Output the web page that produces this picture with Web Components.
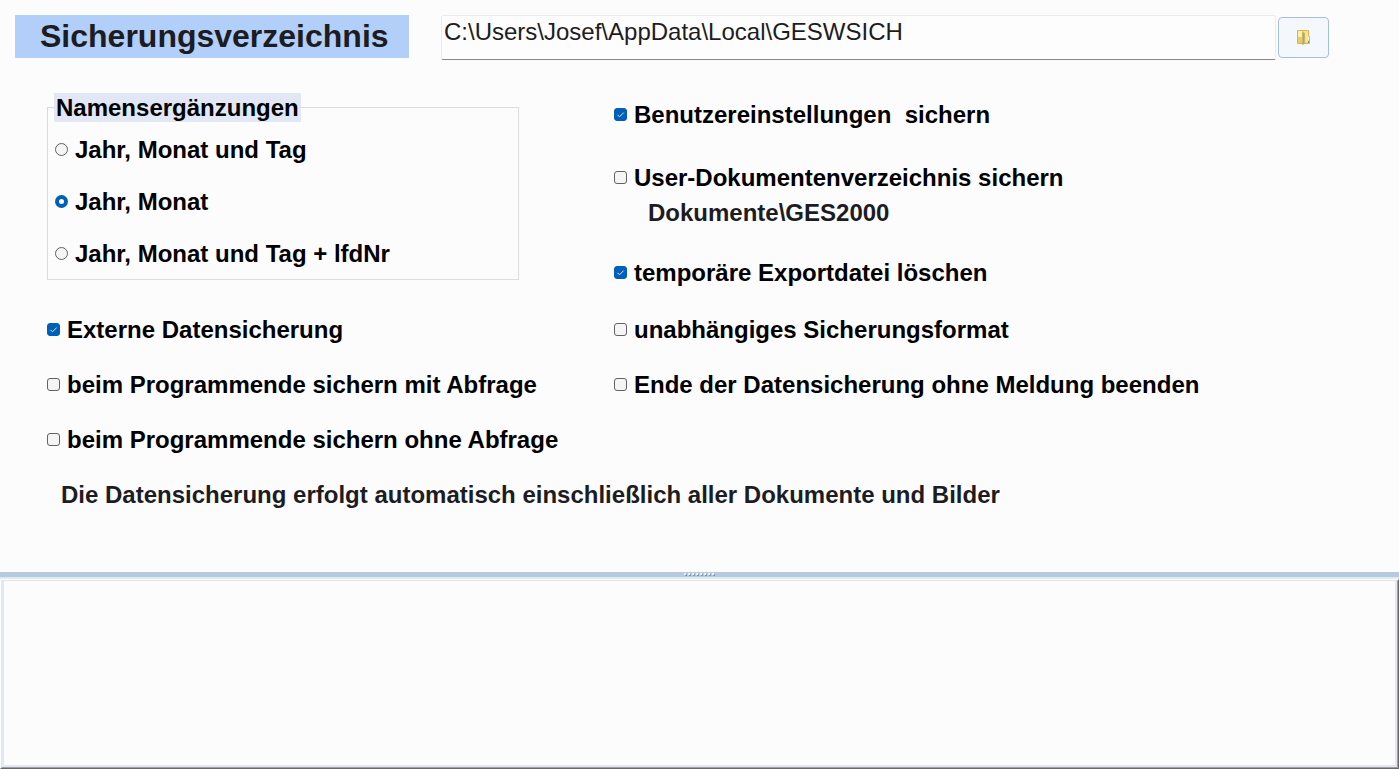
<!DOCTYPE html>
<html lang="de">
<head>
<meta charset="utf-8">
<title>Datensicherung</title>
<style>
    body {
        margin: 0;
        background: #fcfcfc;
        color: #1c1c22;
        font: 24px/29px "Liberation Sans", Arial, sans-serif;
    }
</style>
</head>
<body>
<backup-settings></backup-settings>

<script>
const labelStyles = `
    label {
        display: flex;
        align-items: center;
        gap: 7px;
        width: fit-content;
        color: #000;
        font-weight: bold;
        white-space: pre;
    }

    input {
        appearance: none;
        box-sizing: border-box;
        flex: none;
        width: 13px;
        height: 13px;
        margin: 0;
        border: 1px solid #626262;
        background: #f5f5f5;
    }
`;

class CheckOption extends HTMLElement {
    constructor() {
        super();
        this.attachShadow({ mode: 'open' });
    }

    connectedCallback() {
        this.shadowRoot.innerHTML = `
        <style>
            ${labelStyles}

            :host {
                display: block;
            }

            .box {
                display: grid;
            }

            input,
            svg {
                grid-area: 1 / 1;
            }

            input {
                border-radius: 3px;
            }

            input:checked {
                border-color: #005fb8;
                background: #005fb8;
            }

            svg {
                width: 13px;
                height: 13px;
                pointer-events: none;
                visibility: hidden;
            }

            input:checked + svg {
                visibility: visible;
            }
        </style>

        <label>
            <span class="box">
                <input type="checkbox">
                <svg viewBox="0 0 13 13" fill="none" stroke="#d5e6f6"><path d="M3.5 6.8 5.5 8.8 9.7 4.6"/></svg>
            </span><span><slot></slot></span>
        </label>
        `.replace(/>\s+</g, '><');

        this.shadowRoot.querySelector('input').checked = this.hasAttribute('checked');
    }
}

class RadioGroup extends HTMLElement {
    constructor() {
        super();
        this.attachShadow({ mode: 'open' });
    }

    connectedCallback() {
        const options = this.getAttribute('options').split('|');
        const selected = this.getAttribute('selected');

        this.shadowRoot.innerHTML = `
        <style>
            ${labelStyles}

            :host {
                display: block;
            }

            fieldset {
                min-width: 0;
                margin: 0;
                padding: 13px 7px 11px;
                border: 1px solid #dcdcdc;
            }

            legend {
                margin-left: -1px;
                padding: 0 2px;
                background: #e1e7f4;
                color: #000;
                font-weight: bold;
            }

            .options {
                display: grid;
                gap: 23px;
            }

            input {
                border-radius: 50%;
            }

            input:checked {
                border: 4px solid #005fb8;
                background: #fff;
            }
        </style>

        <fieldset>
            <legend><slot></slot></legend>
            <div class="options">
                ${options.map((text) => `<label><input type="radio" name="suffix" ${text === selected ? 'checked' : ''}><span>${text}</span></label>`).join('')}
            </div>
        </fieldset>
        `;
    }
}

class DirectoryPicker extends HTMLElement {
    constructor() {
        super();
        this.attachShadow({ mode: 'open' });
    }

    connectedCallback() {
        this.shadowRoot.innerHTML = `
        <style>
            :host {
                display: grid;
                grid-template-columns: 426fr 837fr 51px;
                align-items: start;
                padding: 15px 70px 0 15px;
            }

            label {
                margin-right: 32px;
                padding: 3px 0 3px 25px;
                background: #b1cff9;
                font-size: 32px;
                font-weight: bold;
                line-height: 37px;
            }

            input {
                box-sizing: border-box;
                min-width: 0;
                height: 45px;
                margin-right: 2px;
                padding: 0 2px 11px;
                border: 1px solid #ececec;
                border-bottom-color: #868686;
                border-radius: 2px;
                background: #fdfdfd;
                color: inherit;
                font: inherit;
            }

            button {
                display: grid;
                place-items: center;
                height: 41px;
                margin-top: 2px;
                padding: 0;
                border: 1px solid #a5bfe0;
                border-radius: 4px;
                background: #f4f8fc;
            }
        </style>

        <label for="path"><slot></slot></label>
        <input id="path" type="text" value="${this.getAttribute('path')}">
        <button type="button" aria-label="Verzeichnis wählen">
            <svg width="18" height="18" viewBox="0 0 18 18">
                <path d="M2.5 1.5h11v5l1 1v7h-12z" fill="#ecd77d" stroke="#dcb44c"/>
                <path d="M9 2h4v11H9z" fill="#f4e48b"/>
                <path d="M3 2h4v12H3z" fill="#fbf0a8"/>
                <path d="M3 8h4v6H3z" fill="#e7cf68"/>
                <path d="M7 2.5 10 4v11l-3 1z" fill="#c5b568"/>
                <path d="M8.5 4v11" stroke="#b5a763"/>
                <path d="M13 8h1v3h-1z" fill="#fff"/>
                <path d="M13 12h1v2h-1z" fill="#5f9fa0"/>
            </svg>
        </button>
        `;
    }
}

class SplitBar extends HTMLElement {
    constructor() {
        super();
        this.attachShadow({ mode: 'open' });
    }

    connectedCallback() {
        this.shadowRoot.innerHTML = `
        <style>
            :host {
                display: flex;
                justify-content: center;
                height: 5px;
                border-bottom: 2px solid #e1e9f5;
                background: #b5c9e1;
            }

            svg {
                width: 32px;
                height: 5px;
            }
        </style>

        <svg viewBox="0 0 32 5" shape-rendering="crispEdges">
            <defs>
                <pattern id="grip" width="4" height="5" patternUnits="userSpaceOnUse">
                    <path d="M1 2h2v2H1z" fill="#8296ad"/>
                    <path d="M0 1h2v2H0z" fill="#edf1f6"/>
                </pattern>
            </defs>
            <rect width="31" height="5" fill="url(#grip)"/>
        </svg>
        `;
    }
}

class LogPane extends HTMLElement {
    constructor() {
        super();
        this.attachShadow({ mode: 'open' });
    }

    connectedCallback() {
        this.shadowRoot.innerHTML = `
        <style>
            :host {
                display: flex;
                box-sizing: border-box;
                min-height: 120px;
                border: 1px solid #696969;
                border-top-color: #fff;
                border-left-color: #fff;
            }

            textarea {
                box-sizing: border-box;
                flex: 1;
                resize: none;
                margin: 0;
                padding: 4px;
                border: 1px solid #a0a0a0;
                border-top-color: #e3e3e3;
                border-left-color: #e1e7f3;
                outline: none;
                background: #fcfcfc;
                box-shadow: inset 2px 0 #e1e7f3, inset -2px -2px #e1e7f3;
                color: inherit;
                font: inherit;
            }
        </style>

        <textarea aria-label="Protokoll"></textarea>
        `;
    }
}

class BackupSettings extends HTMLElement {
    constructor() {
        super();
        this.attachShadow({ mode: 'open' });
    }

    connectedCallback() {
        this.shadowRoot.innerHTML = `
        <style>
            :host {
                display: flex;
                flex-direction: column;
                min-height: 100vh;
            }

            main {
                display: grid;
                grid-template-columns: minmax(0, 567fr) minmax(0, 785fr);
                padding: 33px 0 63px 47px;
            }

            .left,
            .right {
                display: flex;
                flex-direction: column;
                gap: 26px;
            }

            radio-group {
                margin-right: 95px;
                margin-bottom: 9px;
            }

            .right {
                padding-top: 7px;
            }

            .profile {
                margin-bottom: 8px;
            }

            .documents {
                display: grid;
                gap: 6px;
                margin-bottom: 5px;
            }

            .export {
                margin-bottom: 2px;
            }

            p {
                margin: 0;
                padding-left: 14px;
                font-weight: bold;
                white-space: nowrap;
            }

            .documents p {
                padding-left: 34px;
            }

            log-pane {
                flex: 1;
            }
        </style>

        <directory-picker path="C:\\Users\\Josef\\AppData\\Local\\GESWSICH">Sicherungsverzeichnis</directory-picker>

        <main>
            <div class="left">
                <radio-group
                    options="Jahr, Monat und Tag|Jahr, Monat|Jahr, Monat und Tag + lfdNr"
                    selected="Jahr, Monat">Namensergänzungen</radio-group>
                <check-option checked>Externe Datensicherung</check-option>
                <check-option>beim Programmende sichern mit Abfrage</check-option>
                <check-option>beim Programmende sichern ohne Abfrage</check-option>
                <p>Die Datensicherung erfolgt automatisch einschließlich aller Dokumente und Bilder</p>
            </div>
            <div class="right">
                <check-option class="profile" checked>Benutzereinstellungen  sichern</check-option>
                <div class="documents">
                    <check-option>User-Dokumentenverzeichnis sichern</check-option>
                    <p>Dokumente\\GES2000</p>
                </div>
                <check-option class="export" checked>temporäre Exportdatei löschen</check-option>
                <check-option>unabhängiges Sicherungsformat</check-option>
                <check-option>Ende der Datensicherung ohne Meldung beenden</check-option>
            </div>
        </main>

        <split-bar></split-bar>
        <log-pane></log-pane>
        `;
    }
}

customElements.define('check-option', CheckOption);
customElements.define('radio-group', RadioGroup);
customElements.define('directory-picker', DirectoryPicker);
customElements.define('split-bar', SplitBar);
customElements.define('log-pane', LogPane);
customElements.define('backup-settings', BackupSettings);
</script>
</body>
</html>
